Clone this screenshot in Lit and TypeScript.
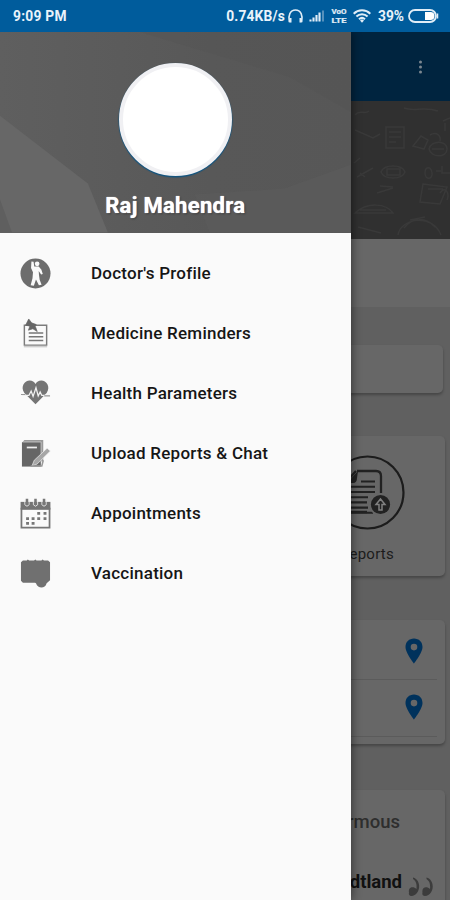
import { LitElement, html, css, svg } from "lit";
import { customElement } from "lit/decorators.js";

const doctor = svg`<svg viewBox="0 0 32 32"><circle cx="16" cy="16" r="15.500" fill="#6d6d6d"/>
<circle cx="17.7" cy="6" r="2.4" fill="#fafafa"/>
<path d="M11.800 3.500 14 3.800l.7 5 4.600.1 2.700 3 1.500 4.500-1.700.6-2.500-3.500.3 4 .7 5 2 5-2.800.7-3-6-2.200 6.500-3.300-.5 1.900-7.200.5-6.300-2-4.400Z" fill="#fafafa"/></svg>`;

const reminder = svg`<svg viewBox="0 0 32 32"><path d="M4.500 7.500h23V28h-23Z" fill="none" stroke="#7c7c7c" stroke-width="1.500"/><path d="M4 29.700h24" stroke="#bbb" stroke-width="1"/>
<path d="M9 15.500h15M9 19.300h15M9 23.200h15" stroke="#777" stroke-width="1.500"/>
<path d="m9 1 3 4 4.800 1.800-1 1.800 2 5.400-4.500-2.900-4.600 1.500 1.500-4.200-4.400-1L7 5Z" fill="#666" stroke="#666" stroke-width=".7"/></svg>`;

const heart = svg`<svg viewBox="0 0 32 32"><path d="M16 27 4.500 15.500C0 9 5 2.700 10 2.700c2.800 0 4.800 1.300 6 3.500 1.200-2.200 3.200-3.500 6-3.500 5 0 10 6.300 5.500 12.800Z" fill="#757575"/>
<path d="M2 18h7.200l2.300-4.500 2 5.500 3-9 2.300 8.500 2-4 1.700 3.500H30" fill="none" stroke="#f2f2f2" stroke-width="1.300"/>
<path d="M1 17h4.500M25 18.500h6" stroke="#999" stroke-width="1.200"/></svg>`;

const book = svg`<svg viewBox="0 0 32 32"><path d="M2.500 4.500 4.500 2H24v22H3Z" fill="#999"/><path d="M2 4.500h19.500v25H2Z" fill="#666"/><path d="M7 9.800h10.500" stroke="#eee" stroke-width="1.800"/><path d="M3 4h18.800v21" fill="none" stroke="#c8c8c8" stroke-width=".8"/>
<path d="m12.500 28.500 2.200-5.500L28 10.500l3.300 3L17.500 27Z" fill="#a6a6a6" stroke="#eee" stroke-width=".7"/><path d="M11 29h11.500l1.500-6" fill="none" stroke="#999" stroke-width="1.600"/></svg>`;

const calendar = svg`<svg viewBox="0 0 32 32"><path d="M1.500 11h29v19.500h-29Z" fill="#fafafa" stroke="#777" stroke-width="1.800"/><path d="M.600 4h30.800v8H.600Z" fill="#747474"/>
<path d="M5 2v5q2.200 3 4.400 0V2M13.800 2v5q2.200 3 4.400 0V2M22.600 2v5q2.200 3 4.400 0V2" fill="none" stroke="#f0f0f0" stroke-width=".9"/>
<path d="M7.200 .8v6.400M16 .8v6.400M24.800 .8v6.400" stroke="#777" stroke-width="2.600"/>
<path d="M17.800 15.800h3M24.300 15.800h3M6.300 21.300h3M12 21.300h3M17.800 21.300h3M24.300 21.300h3M6.300 26.300h3M12 26.300h3" stroke="#777" stroke-width="2.800"/></svg>`;

const vaccine = svg`<svg viewBox="0 0 32 32"><path d="M3 2.500h4l1-1 1.500 1h5l1.300-1 1.300 1h5l1.300-1 1.300 1H29l2 2v18.500l-3.500 3c-1.500 6-9 6-11 0L15.500 25.500H3L1 23.500V4.500Z" fill="#707070"/></svg>`;

const ITEMS = [
  { label: "Doctor's Profile", icon: doctor },
  { label: "Medicine Reminders", icon: reminder },
  { label: "Health Parameters", icon: heart },
  { label: "Upload Reports & Chat", icon: book },
  { label: "Appointments", icon: calendar },
  { label: "Vaccination", icon: vaccine },
];

@customElement("status-bar")
class StatusBar extends LitElement {
  static styles = css`
    :host { display: flex; align-items: center; height: 32px; padding: 0 11px 0 13px; box-sizing: border-box;
      background: #005c9c; color: #e9f3fb; font: 700 13.800px/33px Roboto, sans-serif; }
    .time { flex: 1; letter-spacing: .25px; }
    .speed { letter-spacing: .15px; }
    svg { display: block; flex: none; }
    .head { margin-left: 2px; }
    .signal { margin-left: 5px; }
    .lte { margin-left: 6px; }
    .wifi { margin: 0 7px 0 6px; }
    .battery { margin-left: 4px; }
  `;
  render() {
    return html`
      <span class="time">9:09 PM</span>
      <span class="speed">0.74KB/s</span>
      <svg class="head" width="17" height="16" viewBox="0 0 17 16"><path d="M3.500 13.500H2.300C1 8 3 2 8.500 2s7.500 6 6.200 11.500h-1.200" fill="none" stroke="#e0edf7" stroke-width="1.600"/><path d="M3.500 10v4.500M13.500 10v4.500" stroke="#e0edf7" stroke-width="2"/></svg>
      <svg class="signal" width="16" height="14" viewBox="0 0 16 14"><path d="M1.500 12.500v-2M4.500 12.500V8.500M7.500 12.500V6M10.500 12.500V3.500" stroke="#e0edf7" stroke-width="2.100"/><path d="M14 12.500V1.500" stroke="#6c9fc5" stroke-width="1.600"/></svg>
      <svg class="lte" width="16" height="16" viewBox="0 0 16 16"><g fill="#e0edf7" stroke="#e0edf7" stroke-width=".2" font-family="Roboto, sans-serif" font-weight="700" font-size="6.700"><text x=".5" y="6.300" textLength="15" lengthAdjust="spacingAndGlyphs">VoO</text><text x=".5" y="14.700" textLength="15" lengthAdjust="spacingAndGlyphs">LTE</text></g></svg>
      <svg class="wifi" width="18" height="14" viewBox="0 0 18 14"><g fill="none" stroke="#e0edf7" stroke-width="2"><path d="M.700 4.700c4.600-4.500 12-4.500 16.600 0M3.400 7.500c3.200-3 8-3 11.200 0M6 10.200c1.800-1.600 4.200-1.600 6 0"/></g><path d="m7 11.500 2-1.200 2 1.200-2 2.300Z" fill="#e0edf7"/></svg>
      <span>39%</span>
      <svg class="battery" width="31" height="14" viewBox="0 0 31 14"><rect x="1" y="1" width="27" height="12" rx="6" fill="none" stroke="#e0edf7" stroke-width="1.800"/><path d="M17 3h5.500a4 4 0 0 1 0 8H17Z" fill="#fff"/><path d="M29.500 4.500v5" stroke="#e0edf7" stroke-width="1.500"/></svg>
    `;
  }
}

@customElement("home-page")
class HomePage extends LitElement {
  static styles = css`
    :host { display: flex; flex-direction: column; height: 868px; overflow: hidden; background: #606060;
      font-family: Roboto, sans-serif; color: #1c1c1c; }
    svg { display: block; }
    .appbar { height: 69px; flex: none; background: #00243f; display: flex; justify-content: flex-end; align-items: center; padding-right: 26px; box-sizing: border-box; }
    .banner { height: 138px; flex: none; background: #303030; display: flex; justify-content: flex-end; }
    .strip { height: 68px; flex: none; background: #676767; }
    .card { flex: none; box-sizing: border-box; background: #676767; border-radius: 5px; box-shadow: 0 2px 3px rgba(0,0,0,.28); margin-left: 7px; margin-right: 5px; }
    .search { height: 48px; margin: 38px 7px 0 7px; }
    .tiles { height: 140px; margin-top: 43px; display: flex; justify-content: flex-end; }
    .tile { width: 156px; display: flex; flex-direction: column; align-items: center; padding-top: 19px; box-sizing: border-box; font-size: 15px; line-height: 18px; }
    .tile span { margin-top: 14px; letter-spacing: .25px; }
    .places { height: 124px; margin-top: 44px; padding-right: 8px; }
    .place { height: 56px; border-bottom: 1px solid #5b5b5b; display: flex; align-items: center; justify-content: flex-end; padding-right: 14px; }
    .place:first-child { height: 59px; }
    .place:first-child svg { margin-top: 3px; }
    .place:last-child svg { margin-bottom: 2px; }
    .quote { height: 140px; margin-top: 46px; border-radius: 5px 5px 0 0; padding: 20px 11px 0 0; font-weight: 500; font-size: 18.500px; line-height: 24px; color: #2e2e2e; }
    .line { display: flex; justify-content: flex-end; padding-right: 34px; }
    .author { display: flex; justify-content: flex-end; margin-top: 36px; font-weight: 700; color: #111; gap: 6px; }
    .author svg { margin-top: 7px; }
  `;
  render() {
    const pin = html`<svg width="18" height="26" viewBox="0 0 18 26"><path fill-rule="evenodd" d="M9 .5C4 .500.5 4 .5 9 .500 15 9 25.500 9 25.500S17.500 15 17.500 9C17.500 4 14 .500 9 .500ZM9 5.800a3.300 3.300 0 1 1 0 6.600A3.300 3.300 0 0 1 9 5.800Z" fill="#00325c"/></svg>`;
    return html`
      <div class="appbar"><svg width="7" height="16" viewBox="0 0 7 16"><g fill="#7b8790"><circle cx="3.500" cy="3" r="1.500"/><circle cx="3.500" cy="8" r="1.500"/><circle cx="3.500" cy="13" r="1.500"/></g></svg></div>
      <div class="banner"><svg width="100" height="138" viewBox="0 0 100 138"><g fill="none" stroke="#393939" stroke-width="1.500">
        <path d="M5 14c5-6 9 0 14-4M5 29l18 8 7-4M36 26h18v21H36ZM39 31h12M39 36h12M39 41h7M54 7c10 4 20-2 34 3M93 20l7-3M95 30v-8"/>
        <path d="M63 45l8-10 7 4-4 9ZM80 34c7-4 11 1 10 6M79 48c2-9 18-9 18 0s-16 9-18 0ZM82 48h12M4 62l6-5M7 76l16-9M10 72l5 4M31 71c3-8 21-8 24 0-3 8-21 8-24 0ZM37 68h13v6H37ZM75 72c0-7 6-7 7 0s-7 7-7 0M86 70h5M92 65v7h8"/>
        <path d="M27 92l16-5M30 85l13 1M73 83l24 3-7 17-20-2ZM78 88h15M90 92c5-8 10 0 7 7M5 112c12-11 31-10 38 0ZM10 109h26M48 134c2-16 34-23 43 0M54 127c9-11 22-11 31-1M60 119l15-3M8 126l23 6"/></g></svg></div>
      <div class="strip"></div>
      <div class="card search"></div>
      <div class="card tiles"><div class="tile">
        <svg width="76" height="76" viewBox="0 0 76 76"><circle cx="38.500" cy="37.500" r="36" fill="none" stroke="#1c1c1c" stroke-width="2.200"/>
          <path d="M28 16h19q5 0 5 5v17M27 16l-9 10v31h20" fill="none" stroke="#222" stroke-width="2.300"/><path d="m29 16-11 12h6q4 0 4-5Z" fill="#222"/>
          <path d="M32 26.500h14M22 31.700h24M22 37h24M22 42.200h17M22 47.400h16M22 52.600h17M22 57.800h22" stroke="#222" stroke-width="2.100"/>
          <circle cx="51.500" cy="49.500" r="11.300" fill="#676767"/><circle cx="51.500" cy="49.500" r="9.600" fill="#222"/><path d="M50 55v-5.500h-3l4.500-5.500 4.500 5.500h-3V55Z" fill="none" stroke="#808080" stroke-width="1.500"/></svg>
        <span>Reports</span></div></div>
      <div class="card places"><div class="place">${pin}</div><div class="place">${pin}</div></div>
      <div class="card quote"><div class="line">Enormous</div>
        <div class="author"><span>Brandtland</span><svg width="26" height="20" viewBox="0 0 26 20"><g fill="#3c3c3c"><path d="M5 .500C14 3 13 18 3.500 19 1 19 .500 17 1 15.500 0 9.500 5.500 9 8.500 12 9 7 8 4 5 2Z"/><path d="M18.500 .500C27.500 3 26.500 18 17 19c-2.500 0-3-2-2.500-3.500C13.500 9.500 19 9 22 12c.5-5-.5-8-3.500-10Z"/></g></svg></div></div>
    `;
  }
}

@customElement("nav-drawer")
class NavDrawer extends LitElement {
  static styles = css`
    :host { display: block; background: #fafafa; box-shadow: 1px 0 9px rgba(0,0,0,.48); font-family: Roboto, sans-serif; }
    .header { position: relative; height: 200.500px; box-sizing: border-box; padding-top: 31px; display: flex; flex-direction: column; align-items: center;
      background: linear-gradient(90deg, #5f5f5f, #585858 60%, #575757); }
    .facets { position: absolute; inset: 0; width: 100%; height: 100%; }
    .avatar { position: relative; width: 113px; height: 113px; box-sizing: border-box; border: 4px solid #f0f0f3; border-radius: 50%; background: #fff; box-shadow: 0 1px 1px .5px #12547f; }
    .name { position: relative; margin-top: 16px; font-weight: 700; font-size: 22px; letter-spacing: .3px; line-height: 28px; color: #fff; text-shadow: 0 0 1px #fff, 1px 1px 2px rgba(0,0,0,.4); }
    .list { padding-top: 10.500px; }
    .item { height: 60px; display: flex; align-items: center; padding-left: 20px; gap: 40px; font-weight: 500; font-size: 17px; color: #161616; letter-spacing: .24px; }
    .item svg { display: block; width: 31px; height: 31px; }
  `;
  render() {
    return html`
      <div class="header">
        <svg class="facets" viewBox="0 0 351 201" preserveAspectRatio="none">
          <path d="M140 0h211v80L290 45Z" fill="#545454" opacity=".3"/>
          <path d="M351 133 285 157 195 163 210 201H351Z" fill="#606060" opacity=".4"/>
          <path d="M0 84 88 152 108 201H0Z" fill="#676767"/>
          <path d="M0 168 12 201H0Z" fill="#5f5f5f"/>
        </svg>
        <div class="avatar"></div><div class="name">Raj Mahendra</div></div>
      <div class="list">${ITEMS.map((i) => html`<div class="item">${i.icon}<span>${i.label}</span></div>`)}</div>
    `;
  }
}

@customElement("app-root")
class AppRoot extends LitElement {
  static styles = css`
    :host { display: flex; flex-direction: column; position: relative; width: 450px; height: 900px; overflow: hidden; }
    .body { position: relative; height: 868px; overflow: hidden; }
    .drawer { position: absolute; left: 0; top: 0; bottom: 0; width: 350.500px; }
  `;
  render() {
    return html`<status-bar></status-bar><div class="body"><home-page></home-page><nav-drawer class="drawer"></nav-drawer></div>`;
  }
}
